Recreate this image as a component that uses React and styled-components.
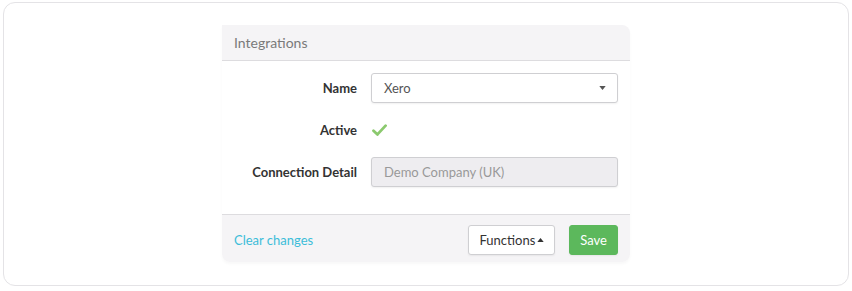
import React from "react";
import styled, { createGlobalStyle } from "styled-components";

const Global = createGlobalStyle`
  html, body { margin: 0; padding: 0; background: #fff; }
  body { font-family: Lato, "Noto Sans", sans-serif; }
  * { box-sizing: border-box; }
`;

function App() {
  return (
    <>
      <Global />
      <Frame>
        <Panel>
          <Header>Integrations</Header>
          <Body>
            <Row>
              <Label>Name</Label>
              <Select>
                <span>Xero</span>
                <Caret viewBox="0 0 8 5"><path d="M0 0h8L4 5z" /></Caret>
              </Select>
            </Row>
            <Row>
              <Label>Active</Label>
              <Check viewBox="0 0 16 13">
                <path d="M1.5 7.2l4.3 4.1L14.6 1.8" />
              </Check>
            </Row>
            <Row>
              <Label>Connection Detail</Label>
              <Input disabled>Demo Company (UK)</Input>
            </Row>
          </Body>
          <Footer>
            <Link>Clear changes</Link>
            <Actions>
              <Button>
                Functions
                <UpCaret viewBox="0 0 8 5"><path d="M0 5h8L4 0z" /></UpCaret>
              </Button>
              <Button primary>Save</Button>
            </Actions>
          </Footer>
        </Panel>
      </Frame>
    </>
  );
}

export default App;

const Frame = styled.div`
  margin: 2px 3px;
  width: 846px;
  height: 284px;
  border: 1px solid #e4e3e6;
  border-radius: 12px;
  padding-top: 22px;
  display: flex;
  justify-content: center;
  align-items: flex-start;
`;

const Panel = styled.div`
  width: 408px;
  display: flex;
  flex-direction: column;
  box-shadow: 0 2px 3px rgba(0, 0, 0, 0.03);
  border-radius: 0 8px 8px 8px;
`;

const Header = styled.div`
  height: 36px;
  padding: 0 12px;
  display: flex;
  align-items: center;
  background: #f5f4f6;
  border-bottom: 1px solid #dddcdf;
  border-top-right-radius: 8px;
  color: #7a7a7a;
  font-size: 14px;
`;

const Body = styled.div`
  padding: 12px 12px 27px 0;
  display: flex;
  flex-direction: column;
  gap: 12px;
`;

const Row = styled.div`
  display: flex;
  align-items: center;
  height: 30px;
  gap: 14px;
`;

const Label = styled.div`
  width: 135px;
  flex-shrink: 0;
  text-align: right;
  font-size: 13px;
  font-weight: 700;
  color: #333;
`;

const Field = styled.div`
  flex: 1;
  height: 30px;
  border: 1px solid #cfcfd2;
  border-radius: 3px;
  padding: 0 12px;
  display: flex;
  align-items: center;
  font-size: 13px;
  box-shadow: 0 1px 2px rgba(0, 0, 0, 0.06);
`;

const Select = styled(Field)`
  justify-content: space-between;
  background: #fff;
  color: #555;
  padding-right: 11px;
`;

const Input = styled(Field)`
  background: ${(p) => (p.disabled ? "#eeedf0" : "#fff")};
  color: #999;
`;

const Caret = styled.svg`
  width: 7px;
  height: 4px;
  fill: #555;
`;

const Check = styled.svg`
  width: 15px;
  height: 12px;
  margin-left: 1px;
  fill: none;
  stroke: #8bc96e;
  stroke-width: 3;
  stroke-linecap: round;
  stroke-linejoin: round;
`;

const Footer = styled.div`
  height: 48px;
  background: #f5f4f6;
  border-top: 1px solid #dddcdf;
  border-radius: 0 0 8px 8px;
  padding: 2px 12px 0;
  display: flex;
  align-items: center;
  justify-content: space-between;
`;

const Link = styled.a`
  color: #3cbdd9;
  font-size: 13px;
  cursor: pointer;
`;

const Actions = styled.div`
  display: flex;
  gap: 14px;
`;

const Button = styled.button`
  height: 30px;
  padding: 0 10px;
  display: flex;
  align-items: center;
  gap: 2px;
  font-family: Lato, "Noto Sans", sans-serif;
  font-size: 13px;
  border-radius: 3px;
  border: 1px solid ${(p) => (p.primary ? "#5cb85c" : "#cfcfd2")};
  background: ${(p) => (p.primary ? "#5cb85c" : "#fff")};
  color: ${(p) => (p.primary ? "#fff" : "#333")};
  box-shadow: 0 1px 2px rgba(0, 0, 0, 0.06);
  cursor: pointer;
`;

const UpCaret = styled.svg`
  width: 7px;
  height: 4px;
  fill: #333;
`;
